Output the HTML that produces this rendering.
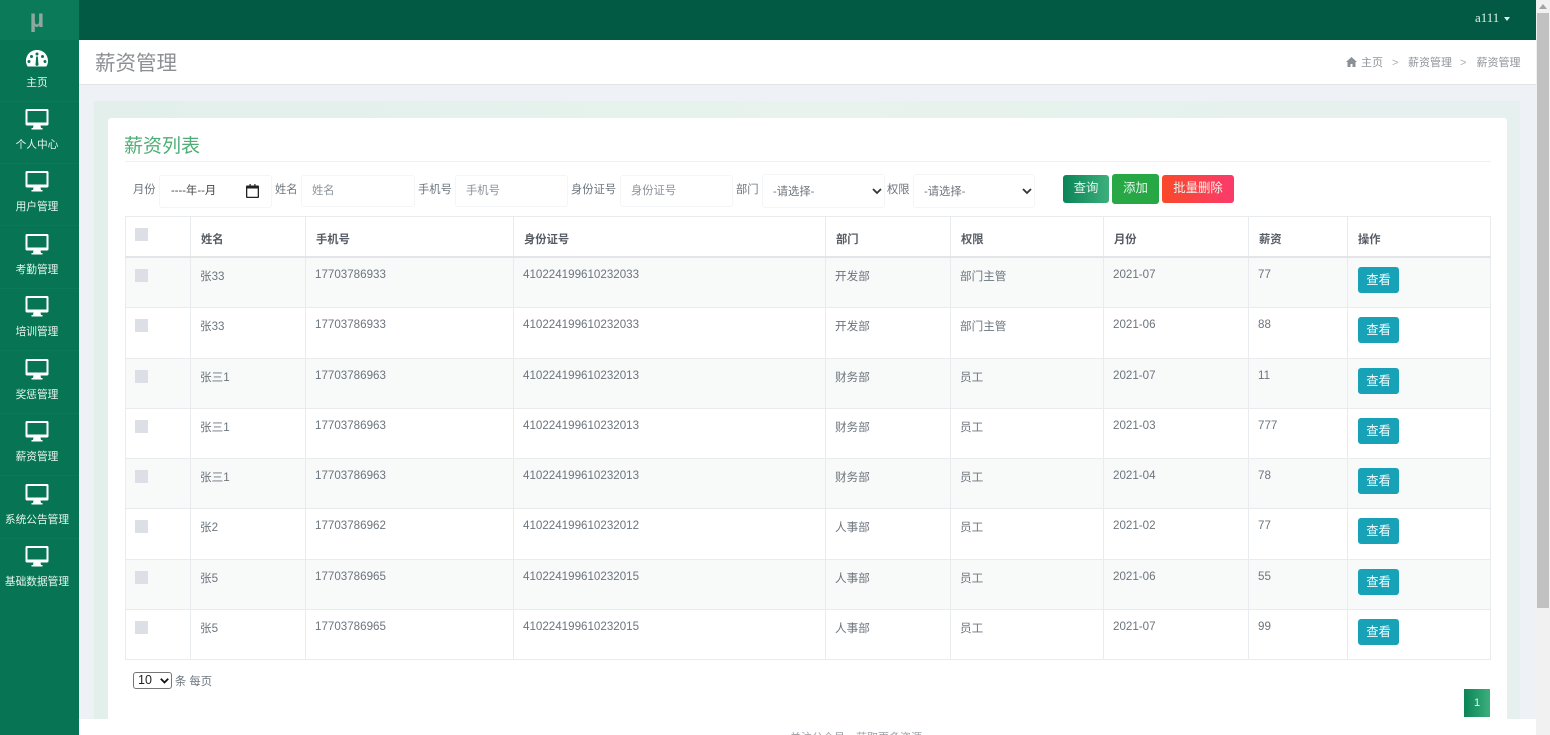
<!DOCTYPE html>
<html lang="zh"><head><meta charset="utf-8"><title>薪资管理</title>
<style>
*{box-sizing:border-box}
html,body{margin:0;padding:0;width:1550px;height:735px;overflow:hidden;background:#eef1f6;font-family:"Liberation Sans","Noto Sans CJK SC",sans-serif;color:#6c757d;font-size:12px}
#root{position:absolute;left:0;top:0;width:1550px;height:735px;overflow:hidden;background:#eef1f6}
.a{position:absolute;white-space:nowrap}
#side{left:0;top:0;width:79px;height:735px;background:#077553}
#logo{left:0;top:0;width:74px;height:40px;color:#8fa89f;font:bold 25px/38px "Liberation Sans",sans-serif;text-align:center}
#logobg{left:0;top:0;width:79px;height:40px;background:#0b7a58}
.nav{left:0;width:79px;height:62px;text-align:center;color:#e8f5ef;font-size:10.7px;border-bottom:1px solid #0a7a58}
.nav svg{position:absolute;left:25px;top:6px}
.nav span{position:absolute;left:0;width:74px;top:35px;line-height:16px}
#top{left:79px;top:0;width:1457px;height:40px;background:#035a44;color:#d7f3e6;font:13px/36px "Liberation Serif",serif}
#hdr{left:79px;top:40px;width:1457px;height:45px;background:#fff;border-bottom:1px solid #e2e4e8}
#panel{left:94px;top:101px;width:1426px;height:618px;background:linear-gradient(90deg,#e2efeb,#e7f3ec 50%,#e6f0ee)}
#card{left:108px;top:118px;width:1399px;height:601px;background:#fff;border-radius:3px 3px 0 0}
#foot{left:79px;top:719px;width:1457px;height:16px;background:#fff}
#sb{left:1536px;top:0;width:14px;height:735px;background:#f1f1f1}
#thumb{left:1537px;top:13px;width:12px;height:595px;background:#c1c1c1}
.inp{height:32px;background:#fff;border:1px solid #f4f5f6;border-radius:3px;line-height:30px;padding-left:10px;color:#8b929a;font-size:11.3px}
.lbl{font-size:11.3px;line-height:16px;color:#6c757d}
.btn{height:28px;line-height:27px;border-radius:3px;color:#e7f6ef;text-align:center;font-size:12.4px}
table{position:absolute;left:125px;top:216px;width:1365px;height:444px;table-layout:fixed;border-collapse:collapse;font-size:11.6px;color:#6c757d}
td,th{border:1px solid #e9ecef;padding:0;position:relative;text-align:left}
th{border-bottom:2px solid #e3e5e8;font-weight:bold;font-size:11.3px;color:#555c63;height:40px;padding-left:10px;padding-top:5px}
td{height:50.25px;vertical-align:top;padding:10px 0 0 9px;line-height:14px}
tr.f td{height:51.25px}
tr.o td{background:#f8f9f9}
td.c{padding-top:12px;font-size:11.6px}
.ck{position:absolute;left:9px;top:11px;width:13px;height:13px;background:#dcdfe6}
.v{display:block;width:41px;height:26px;margin-top:0;position:absolute;left:10px;top:9px;background:#17a2b8;color:#f1fbfc;border-radius:3px;text-align:center;line-height:26px;font-size:12.3px;font-weight:normal}
</style></head><body><div id="root">
<div class="a" id="panel"></div>
<div class="a" id="card"></div>
<div class="a" id="foot"></div>
<div class="a" id="side"></div>
<div class="a" id="logobg"></div>
<div class="a" id="logo">µ</div>

<div class="a nav" style="top:40px">
<svg width="26" height="24" viewBox="0 0 26 24" style="left:24px;top:7px"><path fill="#fff" fill-rule="evenodd" d="M13 3C6.500 3 2 8 2 14c0 2.300.7 4.300 1.800 5.500h18.400C23.300 18.300 24 16.300 24 14 24 8 19.500 3 13 3zM13 5.500a1.500 1.500 0 1 1 0 3 1.500 1.500 0 0 1 0-3zM7.500 8a1.500 1.500 0 1 1 0 3 1.500 1.500 0 0 1 0-3zM18.500 8a1.500 1.500 0 1 1 0 3 1.500 1.500 0 0 1 0-3zM5 13a1.500 1.500 0 1 1 0 3 1.500 1.500 0 0 1 0-3zM21 13a1.500 1.500 0 1 1 0 3 1.500 1.500 0 0 1 0-3zM12.200 9.500h1.600l.6 7a1.600 1.600 0 1 1-2.800 0z"/></svg>
<span>主页</span></div>

<svg width="0" height="0" style="position:absolute"><symbol id="mon" viewBox="0 0 24 22"><path fill="#fff" fill-rule="evenodd" d="M2 1h20a1.500 1.500 0 0 1 1.500 1.500v13.500a1.500 1.500 0 0 1-1.500 1.500h-6.500l.5 2.500h1.500v1.500h-11v-1.500H8l.5-2.500H2A1.500 1.500 0 0 1 .5 16V2.500A1.500 1.500 0 0 1 2 1zM2.500 3v11.500h19V3z"/></symbol></svg>

<div class="a nav" style="top:102px"><svg width="24" height="22"><use href="#mon"/></svg><span>个人中心</span></div>
<div class="a nav" style="top:164px"><svg width="24" height="22"><use href="#mon"/></svg><span>用户管理</span></div>
<div class="a nav" style="top:227px"><svg width="24" height="22"><use href="#mon"/></svg><span>考勤管理</span></div>
<div class="a nav" style="top:289px"><svg width="24" height="22"><use href="#mon"/></svg><span>培训管理</span></div>
<div class="a nav" style="top:352px"><svg width="24" height="22"><use href="#mon"/></svg><span>奖惩管理</span></div>
<div class="a nav" style="top:414px"><svg width="24" height="22"><use href="#mon"/></svg><span>薪资管理</span></div>
<div class="a nav" style="top:477px"><svg width="24" height="22"><use href="#mon"/></svg><span>系统公告管理</span></div>
<div class="a nav" style="top:539px;border:0"><svg width="24" height="22"><use href="#mon"/></svg><span>基础数据管理</span></div>

<div class="a" id="top"><span class="a" style="left:1396px;top:0">a111</span><span class="a" style="left:1425px;top:17px;border:3.500px solid transparent;border-top:4px solid #d7f3e6;border-bottom:0"></span></div>
<div class="a" id="hdr"></div>
<div class="a" style="left:95px;top:49px;font-size:20.5px;line-height:28px;color:#8b8f93;margin-top:1px">薪资管理</div>
<svg class="a" style="left:1346px;top:57px" width="11" height="10" viewBox="0 0 11 10"><path fill="#8a9096" d="M5.500 0 0 5h1.500v5h3V7h2v3h3V5H11z"/></svg>
<div class="a" style="left:1361px;top:55px;font-size:11px;line-height:16px;color:#8f959b">主页</div>
<div class="a" style="left:1392px;top:55px;font-size:11px;line-height:16px;color:#a8adb2">&gt;</div>
<div class="a" style="left:1408px;top:55px;font-size:11px;line-height:16px;color:#8f959b">薪资管理</div>
<div class="a" style="left:1460px;top:55px;font-size:11px;line-height:16px;color:#a8adb2">&gt;</div>
<div class="a" style="left:1476.500px;top:55px;font-size:11px;line-height:16px;color:#8f959b">薪资管理</div>

<div class="a" style="left:124px;top:133px;font-size:19px;line-height:28px;color:#4fae75">薪资列表</div>
<div class="a" style="left:125px;top:161px;width:1366px;height:1px;background:#eef0f2"></div>

<div class="a lbl" style="left:133px;top:182px">月份</div>
<div class="a inp" style="left:159px;top:175px;width:113px;height:33px;color:#444;padding-left:11px;line-height:31px">----年--月</div>
<svg class="a" style="left:246px;top:184px" width="13" height="14" viewBox="0 0 13 14"><path fill="#222" fill-rule="evenodd" d="M1 1.500h2.500V0h1.200v1.500h3.600V0h1.200v1.500H12a1 1 0 0 1 1 1V13a1 1 0 0 1-1 1H1a1 1 0 0 1-1-1V2.500a1 1 0 0 1 1-1zM1.300 4.500v8.200h10.400V4.500z"/></svg>
<div class="a lbl" style="left:275px;top:182px">姓名</div>
<div class="a inp" style="left:301px;top:175px;width:114px">姓名</div>
<div class="a lbl" style="left:418px;top:182px">手机号</div>
<div class="a inp" style="left:455px;top:175px;width:113px">手机号</div>
<div class="a lbl" style="left:571px;top:182px">身份证号</div>
<div class="a inp" style="left:620px;top:175px;width:113px">身份证号</div>
<div class="a lbl" style="left:736px;top:182px">部门</div>
<div class="a inp" style="left:762px;top:174px;width:123px;height:34px;line-height:34px;color:#6c757d">-请选择-</div>
<svg class="a" style="left:872px;top:188px" width="10" height="7" viewBox="0 0 10 7"><path d="M1 1l4 4 4-4" fill="none" stroke="#333" stroke-width="1.800"/></svg>
<div class="a lbl" style="left:887px;top:182px">权限</div>
<div class="a inp" style="left:913px;top:174px;width:122px;height:34px;line-height:34px;color:#6c757d">-请选择-</div>
<svg class="a" style="left:1022px;top:188px" width="10" height="7" viewBox="0 0 10 7"><path d="M1 1l4 4 4-4" fill="none" stroke="#333" stroke-width="1.800"/></svg>
<div class="a btn" style="left:1063px;top:175px;width:46px;background:linear-gradient(90deg,#0b8457,#3caf7c)">查询</div>
<div class="a btn" style="left:1112px;top:174px;width:47px;height:30px;line-height:29px;background:#28a745">添加</div>
<div class="a btn" style="left:1162px;top:175px;width:72px;background:linear-gradient(90deg,#f9492a,#fb3a6c)">批量删除</div>

<table>
<colgroup><col style="width:65px"><col style="width:115px"><col style="width:208px"><col style="width:312px"><col style="width:125px"><col style="width:153px"><col style="width:145px"><col style="width:99px"><col style="width:143px"></colgroup>
<tr><th style="padding:0"><i class="ck"></i></th><th>姓名</th><th>手机号</th><th>身份证号</th><th>部门</th><th>权限</th><th>月份</th><th>薪资</th><th>操作</th></tr>
<tr class="o f"><td><i class="ck"></i></td><td class="c">张33</td><td>17703786933</td><td>410224199610232033</td><td class="c">开发部</td><td class="c">部门主管</td><td>2021-07</td><td>77</td><td><b class="v">查看</b></td></tr>
<tr><td><i class="ck"></i></td><td class="c">张33</td><td>17703786933</td><td>410224199610232033</td><td class="c">开发部</td><td class="c">部门主管</td><td>2021-06</td><td>88</td><td><b class="v">查看</b></td></tr>
<tr class="o"><td><i class="ck"></i></td><td class="c">张三1</td><td>17703786963</td><td>410224199610232013</td><td class="c">财务部</td><td class="c">员工</td><td>2021-07</td><td>11</td><td><b class="v">查看</b></td></tr>
<tr><td><i class="ck"></i></td><td class="c">张三1</td><td>17703786963</td><td>410224199610232013</td><td class="c">财务部</td><td class="c">员工</td><td>2021-03</td><td>777</td><td><b class="v">查看</b></td></tr>
<tr class="o"><td><i class="ck"></i></td><td class="c">张三1</td><td>17703786963</td><td>410224199610232013</td><td class="c">财务部</td><td class="c">员工</td><td>2021-04</td><td>78</td><td><b class="v">查看</b></td></tr>
<tr><td><i class="ck"></i></td><td class="c">张2</td><td>17703786962</td><td>410224199610232012</td><td class="c">人事部</td><td class="c">员工</td><td>2021-02</td><td>77</td><td><b class="v">查看</b></td></tr>
<tr class="o"><td><i class="ck"></i></td><td class="c">张5</td><td>17703786965</td><td>410224199610232015</td><td class="c">人事部</td><td class="c">员工</td><td>2021-06</td><td>55</td><td><b class="v">查看</b></td></tr>
<tr><td><i class="ck"></i></td><td class="c">张5</td><td>17703786965</td><td>410224199610232015</td><td class="c">人事部</td><td class="c">员工</td><td>2021-07</td><td>99</td><td><b class="v">查看</b></td></tr>
</table>

<div class="a" style="left:133px;top:672px;width:39px;height:17px;border:1px solid #767676;border-radius:3px;background:#fff;color:#222;font-size:12.5px;line-height:15px;padding-left:4px">10</div>
<svg class="a" style="left:160px;top:678px" width="9" height="6" viewBox="0 0 9 6"><path d="M.8.800l3.700 3.700L8.200.800" fill="none" stroke="#111" stroke-width="1.800"/></svg>
<div class="a lbl" style="left:175px;top:674px">条 每页</div>
<div class="a" style="left:1464px;top:689px;width:26px;height:28px;background:linear-gradient(90deg,#0b8457,#3caf7c);color:#e8f6ef;text-align:center;line-height:28px;font-size:11px">1</div>
<div class="a" style="left:790px;top:731px;font-size:11px;line-height:14px;color:#9a9fa4">关注公众号，获取更多资源</div>

<div class="a" id="sb"></div><div class="a" id="thumb"></div>
<svg class="a" style="left:1539px;top:4px" width="8" height="5" viewBox="0 0 8 5"><path d="M4 0 8 5H0z" fill="#a3a3a3"/></svg>
</div></body></html>
